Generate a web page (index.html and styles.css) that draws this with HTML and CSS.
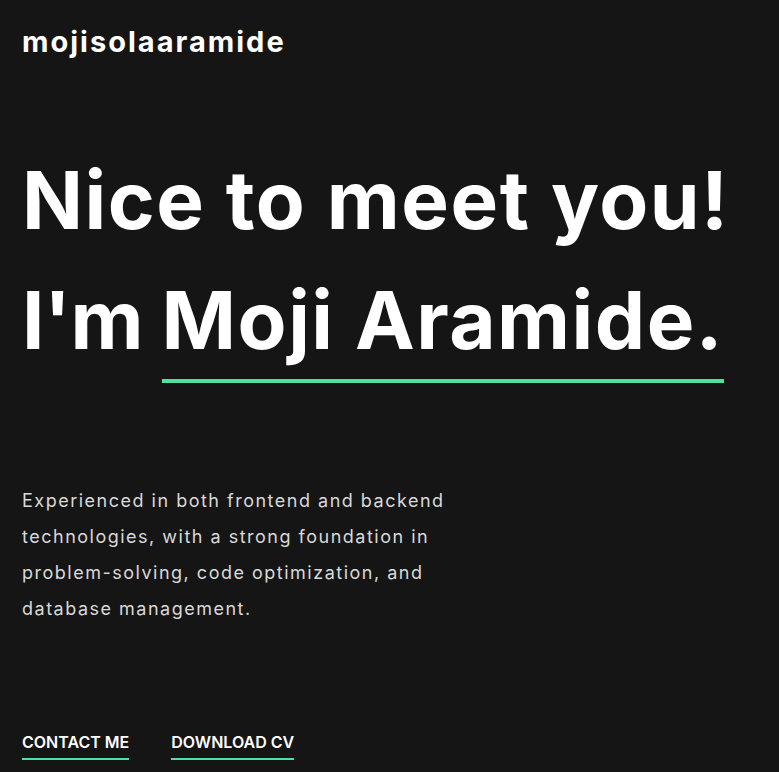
FILE: index.html
```html
<!DOCTYPE html>
<html lang="en">
<head>
<meta charset="utf-8">
<title>mojisolaaramide</title>
<link rel="stylesheet" href="styles.css">
</head>
<body>
<header class="top">
  <div class="logo">mojisolaaramide</div>
</header>
<main class="hero">
  <h1 class="title">Nice to meet you!<br><span class="im">I'm </span><span class="name">Moji Aramide.</span></h1>
  <p class="intro">Experienced in both frontend and backend technologies, with a strong foundation in problem-solving, code optimization, and database management.</p>
  <nav class="actions">
    <a class="link" href="#">CONTACT ME</a>
    <a class="link" href="#">DOWNLOAD CV</a>
  </nav>
</main>
</body>
</html>
```

FILE: styles.css
```css
html, body {
  margin: 0;
  padding: 0;
  background: #151515;
  color: #ffffff;
  font-family: "Inter", "Noto Sans", sans-serif;
}
body {
  padding: 0 22px;
  height: 772px;
  overflow: hidden;
}
.top {
  padding-top: 24px;
}
.logo {
  font-size: 29px;
  line-height: 36px;
  font-weight: 700;
  letter-spacing: 2px;
}
.hero {
  padding-top: 80px;
}
.title {
  margin: 0;
  font-size: 80px;
  line-height: 120px;
  font-weight: 700;
  letter-spacing: 1.5px;
}
.im {
  letter-spacing: -0.5px;
}
.name {
  display: inline-block;
  line-height: 118px;
  border-bottom: 4px solid #4ee1a0;
}
.intro {
  margin: 100px 0 0;
  width: 440px;
  font-size: 18px;
  line-height: 36px;
  letter-spacing: 1.5px;
  color: #d9d9d9;
}
.actions {
  margin-top: 103px;
  display: flex;
  gap: 42px;
}
.link {
  color: #ffffff;
  text-decoration: none;
  font-size: 16px;
  font-weight: 600;
  line-height: 24px;
  padding-bottom: 4px;
  border-bottom: 2px solid #4ee1a0;
}
```
